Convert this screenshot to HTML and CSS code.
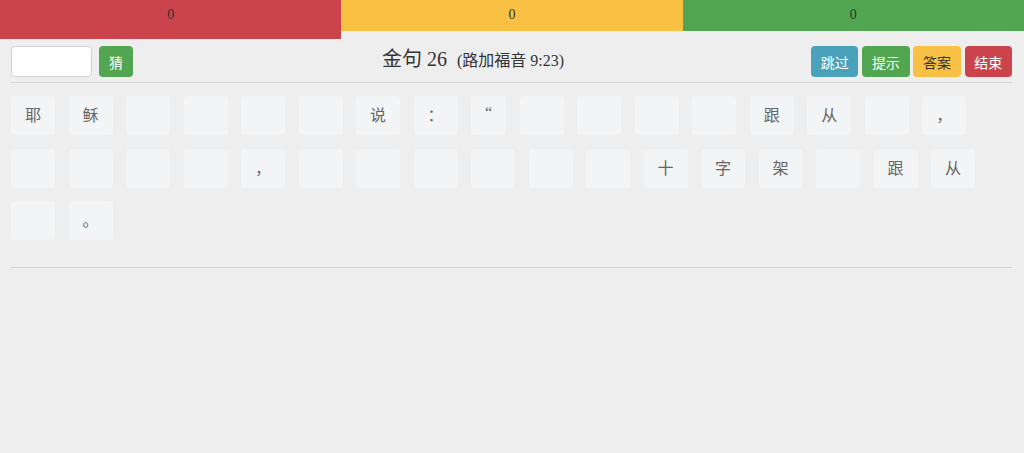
FILE: index.html
```html
<!DOCTYPE html>
<html lang="zh">
<head>
<meta charset="utf-8">
<title>金句 26</title>
<link rel="stylesheet" href="styles.css">
</head>
<body>
<div class="scorebar">
  <div class="score score-red">0</div>
  <div class="score score-yellow">0</div>
  <div class="score score-green">0</div>
</div>
<div class="main">
  <div class="toolbar">
    <div class="guess">
      <input class="guess-input" type="text">
      <button class="btn btn-green btn-guess">猜</button>
    </div>
    <h3 class="title">金句 26 <small class="ref">(路加福音 9:23)</small></h3>
    <div class="actions">
      <button class="btn btn-info">跳过</button>
      <button class="btn btn-green">提示</button>
      <button class="btn btn-yellow">答案</button>
      <button class="btn btn-red">结束</button>
    </div>
  </div>
  <div class="tiles">
    <span class="tile">耶</span><span class="tile">稣</span><span class="tile"></span><span class="tile"></span><span class="tile"></span><span class="tile"></span><span class="tile">说</span><span class="tile">：</span><span class="tile tile-narrow">“</span><span class="tile"></span><span class="tile"></span><span class="tile"></span><span class="tile"></span><span class="tile">跟</span><span class="tile">从</span><span class="tile"></span><span class="tile">，</span>
    <span class="tile"></span><span class="tile"></span><span class="tile"></span><span class="tile"></span><span class="tile">，</span><span class="tile"></span><span class="tile"></span><span class="tile"></span><span class="tile"></span><span class="tile"></span><span class="tile"></span><span class="tile">十</span><span class="tile">字</span><span class="tile">架</span><span class="tile"></span><span class="tile">跟</span><span class="tile">从</span>
    <span class="tile"></span><span class="tile">。</span>
  </div>
</div>
</body>
</html>
```
FILE: styles.css
```css
* { box-sizing: border-box; }
html, body {
  margin: 0;
  background: #eeeeee;
  font-family: "Liberation Serif", "Noto Sans CJK SC", serif;
  color: #333;
}
.scorebar {
  display: flex;
  align-items: flex-start;
}
.score {
  flex: 1;
  height: 31px;
  padding-top: 6px;
  line-height: 17px;
  font-size: 14px;
  text-align: center;
  color: #333;
}
.score-red { background: #cc444b; height: 39px; }
.score-yellow { background: #f8c143; }
.score-green { background: #52a652; }

.main {
  padding: 0 12px 0 11px;
}
.toolbar {
  display: flex;
  align-items: center;
  height: 44px;
  padding-top: 7px;
  padding-bottom: 5px;
  border-bottom: 1px solid #d4d4d4;
}
.guess {
  display: flex;
  gap: 7px;
}
.guess-input {
  width: 81px;
  height: 31px;
  border: 1px solid #d2d2d2;
  border-radius: 4px;
  background: #fff;
  margin: 0;
}
.btn {
  height: 31px;
  border: none;
  border-radius: 4px;
  font-family: "Liberation Sans", "Noto Sans CJK SC", sans-serif;
  font-size: 14px;
  color: #fff;
  margin: 0;
  padding: 0;
  width: 47.5px;
}
.btn-guess { width: 34px; }
.btn-green { background: #52a652; }
.btn-info { background: #4aa2ba; }
.btn-yellow { background: #f8c143; color: #333; }
.btn-red { background: #cc444b; }
.title {
  flex: 1;
  margin: 0;
  text-align: center;
  font-size: 20px;
  font-weight: normal;
  line-height: 22px;
  color: #333;
  padding-bottom: 4px;
  padding-left: 2px;
}
.ref {
  font-size: 16px;
  margin-left: 5px;
}
.actions {
  display: flex;
  gap: 3.7px;
}
.tiles {
  display: flex;
  flex-wrap: wrap;
  gap: 13.5px;
  padding-top: 13px;
  padding-bottom: 27px;
  border-bottom: 1px solid #d4d4d4;
}
.tile {
  box-sizing: content-box;
  min-width: 16px;
  height: 39px;
  padding: 0 14px;
  background: #f3f4f5;
  border-radius: 4px;
  font-size: 16px;
  line-height: 39px;
  text-align: center;
  color: #666;
}
.tile-narrow {
  min-width: 0;
  line-height: 34px;
}
```
